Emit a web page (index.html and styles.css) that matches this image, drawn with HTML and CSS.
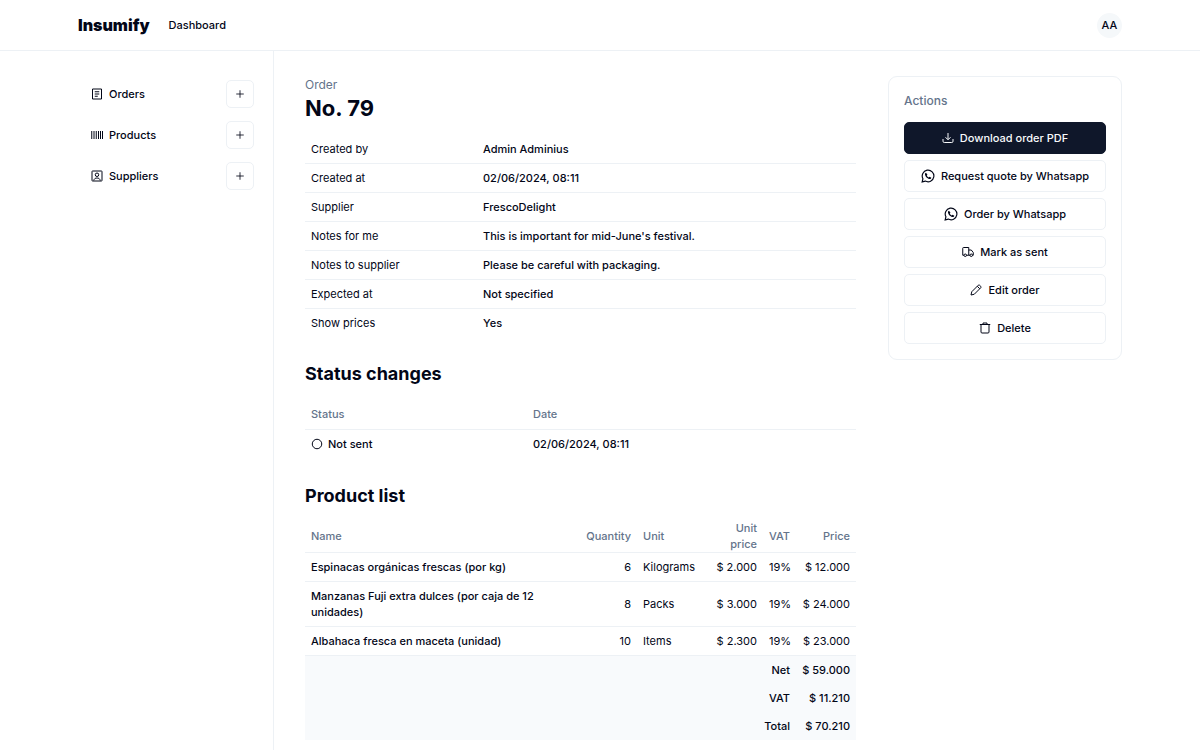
FILE: index.html
```html
<!DOCTYPE html>
<html lang="en">
<head>
  <meta charset="utf-8" />
  <meta name="viewport" content="width=device-width, initial-scale=1.0" />
  <title>Order No. 79 - Insumify</title>
  <link rel="stylesheet" href="styles.css">
</head>
<body>
  <header class="header">
    <div class="container header-inner">
      <a href="#" class="logo">Insumify</a>
      <nav><a href="#">Dashboard</a></nav>
      <button type="button" class="avatar">AA</button>
    </div>
  </header>

  <div class="container layout">
    <nav class="sidebar">
      <div class="side-item">
        <a href="#">
          <svg class="icon" viewBox="0 0 24 24"><path d="M3 2h18v20H3zM7.500 7.500h9M7.500 12h9M7.500 16.500h6"/></svg>
          Orders
        </a>
        <button type="button" class="add" aria-label="New order"><svg class="icon" viewBox="0 0 24 24"><path d="M12 3v18M3 12h18"/></svg></button>
      </div>
      <div class="side-item">
        <a href="#">
          <svg class="icon" viewBox="0 0 24 24"><path d="M1.500 4v16M6 4v16M10.500 4v16M15 4v16M19 4v16M23 4v16"/></svg>
          Products
        </a>
        <button type="button" class="add" aria-label="New product"><svg class="icon" viewBox="0 0 24 24"><path d="M12 3v18M3 12h18"/></svg></button>
      </div>
      <div class="side-item">
        <a href="#">
          <svg class="icon" viewBox="0 0 24 24"><rect x="2" y="2" width="20" height="20" rx="1"/><circle cx="12" cy="9.500" r="3.500"/><path d="M5.500 21c.8-3.500 3-5 6.500-5s5.700 1.500 6.500 5"/></svg>
          Suppliers
        </a>
        <button type="button" class="add" aria-label="New supplier"><svg class="icon" viewBox="0 0 24 24"><path d="M12 3v18M3 12h18"/></svg></button>
      </div>
    </nav>

    <main class="content">
      <section>
        <p class="label">Order</p>
        <h1>No. 79</h1>
        <table class="details">
          <tr><th scope="row">Created by</th><td>Admin Adminius</td></tr>
          <tr><th scope="row">Created at</th><td>02/06/2024, 08:11</td></tr>
          <tr><th scope="row">Supplier</th><td>FrescoDelight</td></tr>
          <tr><th scope="row">Notes for me</th><td>This is important for mid-June's festival.</td></tr>
          <tr><th scope="row">Notes to supplier</th><td>Please be careful with packaging.</td></tr>
          <tr><th scope="row">Expected at</th><td>Not specified</td></tr>
          <tr><th scope="row">Show prices</th><td>Yes</td></tr>
        </table>
      </section>

      <section>
        <h2>Status changes</h2>
        <table class="status">
          <thead>
            <tr><th>Status</th><th>Date</th></tr>
          </thead>
          <tbody>
            <tr>
              <td><span class="state"><svg class="icon" viewBox="0 0 24 24"><circle cx="12" cy="12" r="9.500"/></svg>Not sent</span></td>
              <td>02/06/2024, 08:11</td>
            </tr>
          </tbody>
        </table>
      </section>

      <section>
        <h2>Product list</h2>
        <table class="products">
          <colgroup>
            <col><col class="col-quantity"><col class="col-unit"><col class="col-unit-price"><col class="col-vat"><col class="col-price">
          </colgroup>
          <thead>
            <tr><th>Name</th><th class="num">Quantity</th><th>Unit</th><th class="num">Unit price</th><th>VAT</th><th class="num">Price</th></tr>
          </thead>
          <tbody>
            <tr><td class="name">Espinacas orgánicas frescas (por kg)</td><td class="num">6</td><td>Kilograms</td><td class="num">$ 2.000</td><td>19%</td><td class="num">$ 12.000</td></tr>
            <tr><td class="name">Manzanas Fuji extra dulces (por caja de 12 unidades)</td><td class="num">8</td><td>Packs</td><td class="num">$ 3.000</td><td>19%</td><td class="num">$ 24.000</td></tr>
            <tr><td class="name">Albahaca fresca en maceta (unidad)</td><td class="num">10</td><td>Items</td><td class="num">$ 2.300</td><td>19%</td><td class="num">$ 23.000</td></tr>
          </tbody>
          <tfoot>
            <tr><td colspan="5" class="num">Net</td><td class="num">$ 59.000</td></tr>
            <tr><td colspan="5" class="num">VAT</td><td class="num">$ 11.210</td></tr>
            <tr><td colspan="5" class="num">Total</td><td class="num">$ 70.210</td></tr>
          </tfoot>
        </table>
      </section>
    </main>

    <aside class="actions">
      <h3>Actions</h3>
      <button type="button" class="btn primary">
        <svg class="icon" viewBox="0 0 24 24"><path d="M12 2v13M7 10.500l5 5 5-5M2 14v4.500a2.500 2.500 0 0 0 2.500 2.500h15a2.500 2.500 0 0 0 2.500-2.500V14"/></svg>
        Download order PDF
      </button>
      <button type="button" class="btn">
        <svg class="icon big" viewBox="0 0 24 24"><path d="M2 22l1.300-5.300A10 10 0 1 1 7.300 20.700z"/><path class="solid" d="M8.600 6.300c-1.100.3-1.800 1.500-1.800 2.700 0 3.500 4.700 8.200 8.200 8.200 1.400 0 2.500-.8 2.700-2.200l-3-1.700-1.500 1.300c-1.400-.6-2.700-1.900-3.300-3.300l1.200-1.300z"/></svg>
        Request quote by Whatsapp
      </button>
      <button type="button" class="btn">
        <svg class="icon big" viewBox="0 0 24 24"><path d="M2 22l1.300-5.300A10 10 0 1 1 7.300 20.700z"/><path class="solid" d="M8.600 6.300c-1.100.3-1.800 1.500-1.800 2.700 0 3.500 4.700 8.200 8.200 8.200 1.400 0 2.500-.8 2.700-2.200l-3-1.700-1.500 1.300c-1.400-.6-2.700-1.900-3.300-3.300l1.200-1.300z"/></svg>
        Order by Whatsapp
      </button>
      <button type="button" class="btn">
        <svg class="icon" viewBox="0 0 24 24"><path d="M4 18.500H1.500v-14a1.500 1.500 0 0 1 1.500-1.500h10.500v15.500H9M13.500 8h5l4 5v5.500H21M13.500 18.500H16"/><circle cx="6.500" cy="18.500" r="2.500"/><circle cx="18.500" cy="18.500" r="2.500"/></svg>
        Mark as sent
      </button>
      <button type="button" class="btn">
        <svg class="icon" viewBox="0 0 24 24"><path d="M2 22l1.500-6.500L16.500 2.500a2 2 0 0 1 2.800 0l2.200 2.200a2 2 0 0 1 0 2.800L8.500 20.500zM14.500 4.500l5 5"/></svg>
        Edit order
      </button>
      <button type="button" class="btn">
        <svg class="icon" viewBox="0 0 24 24"><path d="M1.500 5h21M8 5V2h8v3M4 5v15a2 2 0 0 0 2 2h12a2 2 0 0 0 2-2V5"/></svg>
        Delete
      </button>
    </aside>
  </div>
</body>
</html>
```
FILE: styles.css
```css
* {
  box-sizing: border-box;
}

body {
  margin: 0;
  background: #fff;
  font-family: Inter, "Liberation Sans", sans-serif;
  font-size: 11px;
  line-height: 16px;
  color: #020617;
}

h1, h2, h3, p {
  margin: 0;
}

a {
  color: inherit;
  text-decoration: none;
}

button {
  font: inherit;
  font-weight: 500;
  color: inherit;
  cursor: pointer;
}

.container {
  max-width: 1094px;
  margin: 0 auto;
  padding: 0 25px;
}

.icon {
  width: 12px;
  height: 12px;
  flex: none;
  fill: none;
  stroke: currentColor;
  stroke-width: 2;
}

.icon.big {
  width: 14px;
  height: 14px;
}

.icon .solid {
  fill: currentColor;
  stroke: none;
}

/* header */
.header {
  border-bottom: 1px solid #edf1f5;
}

.header-inner {
  display: flex;
  align-items: center;
  gap: 19px;
  height: 50px;
  font-weight: 500;
}

.logo {
  font-size: 16px;
  font-weight: 900;
}

.avatar {
  width: 25px;
  height: 25px;
  margin-left: auto;
  padding: 0;
  border: 0;
  border-radius: 50%;
  background: #f5f8fa;
}

/* layout */
.layout {
  display: flex;
  align-items: flex-start;
}

.sidebar {
  display: flex;
  flex-direction: column;
  gap: 13px;
  width: 196px;
  min-height: calc(100vh - 51px);
  padding: 29px 19px 29px 13px;
  border-right: 1px solid #edf1f5;
  font-weight: 500;
}

.side-item,
.side-item a {
  display: flex;
  align-items: center;
}

.side-item {
  justify-content: space-between;
}

.side-item a {
  gap: 6px;
}

.add {
  display: flex;
  align-items: center;
  justify-content: center;
  width: 28px;
  height: 28px;
  padding: 0;
  border: 1px solid #edf1f5;
  border-radius: 5px;
  background: #fff;
}

.add .icon {
  width: 10px;
  height: 10px;
}

.content {
  display: flex;
  flex: 1;
  flex-direction: column;
  gap: 23px;
  padding: 25px 32px 10px 31px;
}

/* headings */
.label {
  font-size: 12px;
  line-height: 18px;
  color: #64748b;
}

h1 {
  margin-bottom: 12px;
  font-size: 22px;
  line-height: 29px;
  font-weight: 700;
}

h2 {
  margin-bottom: 10px;
  font-size: 18px;
  line-height: 28px;
  font-weight: 700;
}

/* tables */
table {
  width: 100%;
  table-layout: fixed;
  border-spacing: 0;
}

th,
td {
  padding: 6px;
  border-bottom: 1px solid #edf1f5;
  text-align: left;
  font-weight: 400;
}

.details tr:last-child > td,
.details tr:last-child > th {
  border-bottom: 0;
}

.status tbody td {
  border-bottom-color: transparent;
}

thead th {
  height: 32px;
  padding: 0 6px;
  color: #64748b;
  font-weight: 500;
}

.details th {
  width: 172px;
}

.details td,
.status td,
.name,
tfoot td {
  font-weight: 500;
}

.status th:first-child {
  width: 222px;
}

.state {
  display: flex;
  align-items: center;
  gap: 5px;
}

.num {
  text-align: right;
}

.col-quantity {
  width: 57px;
}

.col-unit {
  width: 68px;
}

.col-unit-price {
  width: 58px;
}

.col-vat {
  width: 33px;
}

.col-price {
  width: 60px;
}

tfoot td {
  border-bottom: 0;
  background: #f8fafc;
}

/* actions card */
.actions {
  display: flex;
  flex-direction: column;
  gap: 6px;
  width: 234px;
  margin-top: 25px;
  padding: 15px;
  border: 1px solid #edf1f5;
  border-radius: 9px;
}

.actions h3 {
  margin-bottom: 6px;
  font-size: 12px;
  line-height: 18px;
  font-weight: 500;
  color: #64748b;
}

.btn {
  display: flex;
  align-items: center;
  justify-content: center;
  gap: 6px;
  height: 32px;
  border: 1px solid #edf1f5;
  border-radius: 5px;
  background: #fff;
}

.btn.primary {
  border-color: #0f172a;
  background: #0f172a;
  color: #f8fafc;
}
```
